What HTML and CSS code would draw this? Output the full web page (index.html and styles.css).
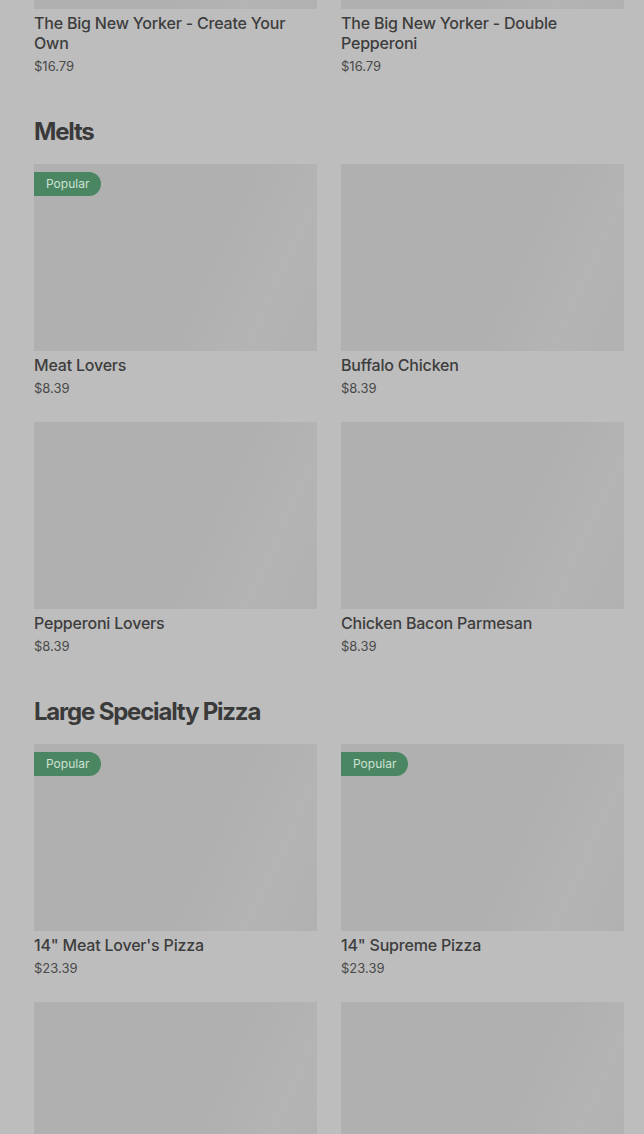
FILE: index.html
```html
<!DOCTYPE html>
<html lang="en">
<head>
  <meta charset="UTF-8">
  <meta name="viewport" content="width=device-width, initial-scale=1.0">
  <title>Menu</title>
  <link rel="stylesheet" href="styles.css">
</head>
<body>
  <main class="menu">
    <section class="category">
      <div class="grid">
        <div class="item">
          <div class="thumb"></div>
          <p class="item-name">The Big New Yorker - Create Your Own</p>
          <p class="item-price">$16.79</p>
        </div>
        <div class="item">
          <div class="thumb"></div>
          <p class="item-name">The Big New Yorker - Double Pepperoni</p>
          <p class="item-price">$16.79</p>
        </div>
      </div>
    </section>

    <section class="category">
      <h2>Melts</h2>
      <div class="grid">
        <div class="item">
          <div class="thumb"><span class="badge">Popular</span></div>
          <p class="item-name">Meat Lovers</p>
          <p class="item-price">$8.39</p>
        </div>
        <div class="item">
          <div class="thumb"></div>
          <p class="item-name">Buffalo Chicken</p>
          <p class="item-price">$8.39</p>
        </div>
        <div class="item">
          <div class="thumb"></div>
          <p class="item-name">Pepperoni Lovers</p>
          <p class="item-price">$8.39</p>
        </div>
        <div class="item">
          <div class="thumb"></div>
          <p class="item-name">Chicken Bacon Parmesan</p>
          <p class="item-price">$8.39</p>
        </div>
      </div>
    </section>

    <section class="category">
      <h2>Large Specialty Pizza</h2>
      <div class="grid">
        <div class="item">
          <div class="thumb"><span class="badge">Popular</span></div>
          <p class="item-name">14" Meat Lover's Pizza</p>
          <p class="item-price">$23.39</p>
        </div>
        <div class="item">
          <div class="thumb"><span class="badge">Popular</span></div>
          <p class="item-name">14" Supreme Pizza</p>
          <p class="item-price">$23.39</p>
        </div>
        <div class="item">
          <div class="thumb"></div>
        </div>
        <div class="item">
          <div class="thumb"></div>
        </div>
      </div>
    </section>
  </main>
</body>
</html>
```

FILE: styles.css
```css
body {
  margin: 0;
  background: #bdbdbd;
  font-family: Inter, "Noto Sans", sans-serif;
  color: #3b3b3b;
  overflow: hidden;
}

/* page is scrolled, first row of cards is cut off at the top */
.menu {
  margin-top: -178px;
  padding: 0 20px 0 34px;
}

.category h2 {
  margin: 40px 0 16px;
  font-size: 24px;
  line-height: 32px;
  font-weight: 700;
  letter-spacing: -1.2px;
  color: #3a3a3a;
}

.grid {
  display: grid;
  grid-template-columns: 1fr 1fr;
  column-gap: 24px;
  row-gap: 24px;
}

.thumb {
  position: relative;
  height: 187px;
  background: linear-gradient(115deg, #b0b0b0 0%, #b0b0b0 62%, #b4b4b4 80%, #b1b1b1 100%);
}

.badge {
  position: absolute;
  top: 8px;
  left: 0;
  height: 24px;
  line-height: 24px;
  padding: 0 12px;
  border-radius: 0 12px 12px 0;
  background: #4a8662;
  color: #cfe2d5;
  font-size: 12px;
}

.item p {
  margin: 0;
}

.item-name {
  margin-top: 4px !important;
  font-size: 16px;
  line-height: 20px;
  font-weight: 500;
  letter-spacing: -0.2px;
  color: #3d3d3d;
}

.item-price {
  margin-top: 3px !important;
  font-size: 13px;
  line-height: 20px;
  color: #4a4a4a;
}
```
